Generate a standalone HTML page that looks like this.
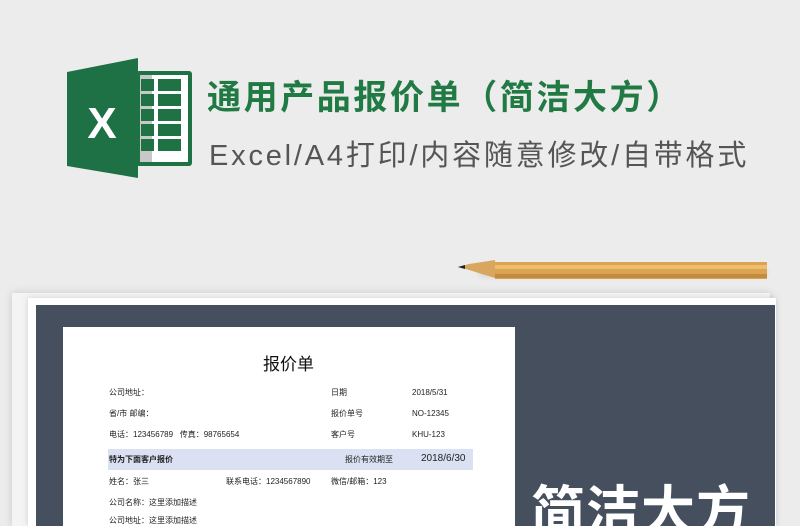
<!DOCTYPE html>
<html><head><meta charset="utf-8"><style>
*{margin:0;padding:0;box-sizing:border-box}
html,body{width:800px;height:526px;overflow:hidden}
body{background:#ececec;position:relative;font-family:"Liberation Sans","Noto Sans CJK SC",sans-serif}
.abs{position:absolute}
.t{color:#222;position:absolute;white-space:nowrap;font-size:8px;line-height:10px}
#clip{position:absolute;left:0;top:0;width:800px;height:526px;overflow:hidden}
</style></head><body><div id="clip">
<svg class="abs" style="left:60px;top:50px" width="140" height="140" viewBox="60 50 140 140">
<rect x="136" y="71" width="56" height="95" rx="3" fill="#1f7244"/>
<rect x="140" y="75" width="48" height="87" fill="#fff"/>
<rect x="140" y="75" width="12" height="87" fill="#c8c8c8"/>
<g fill="#1f7244">
<rect x="141" y="79" width="13" height="12"/><rect x="158" y="79" width="23" height="12"/>
<rect x="141" y="94" width="13" height="12"/><rect x="158" y="94" width="23" height="12"/>
<rect x="141" y="109" width="13" height="12"/><rect x="158" y="109" width="23" height="12"/>
<rect x="141" y="124" width="13" height="12"/><rect x="158" y="124" width="23" height="12"/>
<rect x="141" y="139" width="13" height="12"/><rect x="158" y="139" width="23" height="12"/>
</g>
<polygon points="67,72 138,58 138,178 67,166" fill="#1e7145"/>
<text x="102" y="138" text-anchor="middle" fill="#fff" font-size="44" font-weight="bold" font-family="Liberation Sans">X</text>
</svg>
<div class="abs" style="left:207px;top:70px;font-size:34px;font-weight:bold;color:#217a44;letter-spacing:2.6px;white-space:nowrap">通用产品报价单（简洁大方）</div>
<div class="abs" style="left:209px;top:132px;font-size:29px;color:#555;letter-spacing:2.8px;white-space:nowrap">Excel/A4打印/内容随意修改/自带格式</div>
<div class="abs" style="left:480px;top:270px;width:286px;height:6px;background:rgba(0,0,0,0.12);filter:blur(3px)"></div>
<svg class="abs" style="left:455px;top:260px" width="315" height="22">
<polygon points="3,7 14,4 40,0 40,18 14,10" fill="#d9a660"/>
<polygon points="3,7 10,5 10,9" fill="#222"/>
<rect x="40" y="2" width="272" height="17" fill="#dba452"/>
<rect x="40" y="5" width="272" height="4" fill="#eebd6e"/>
<rect x="40" y="14" width="272" height="4" fill="#c38b3d"/>
</svg>
<div class="abs" style="left:12px;top:293px;width:758px;height:233px;background:#f4f4f4;box-shadow:0 0 8px rgba(0,0,0,0.15)"></div>
<div class="abs" style="left:28px;top:298px;width:748px;height:228px;background:#fff;box-shadow:0 0 6px rgba(0,0,0,0.15)"></div>
<div class="abs" style="left:36px;top:305px;width:739px;height:221px;background:#454f5e"></div>
<div class="abs" style="left:63px;top:327px;width:452px;height:199px;background:#fff"></div>
<div class="abs" style="left:263px;top:350px;font-size:17px;color:#111">报价单</div>
<div class="t" style="left:109px;top:388px">公司地址：</div>
<div class="t" style="left:331px;top:388px">日期</div>
<div class="t" style="left:412px;top:388px">2018/5/31</div>
<div class="t" style="left:109px;top:409px">省/市 邮编：</div>
<div class="t" style="left:331px;top:409px">报价单号</div>
<div class="t" style="left:412px;top:409px">NO-12345</div>
<div class="t" style="left:109px;top:430px">电话：123456789 &nbsp; 传真：98765654</div>
<div class="t" style="left:331px;top:430px">客户号</div>
<div class="t" style="left:412px;top:430px">KHU-123</div>
<div class="abs" style="left:108px;top:449px;width:365px;height:21px;background:#d9e1f2"></div>
<div class="t" style="left:109px;top:455px;font-weight:bold">特为下面客户报价</div>
<div class="t" style="left:345px;top:455px">报价有效期至</div>
<div class="t" style="left:421px;top:453px;font-size:10px;line-height:12px">2018/6/30</div>
<div class="t" style="left:109px;top:477px">姓名：张三</div>
<div class="t" style="left:226px;top:477px">联系电话：1234567890</div>
<div class="t" style="left:331px;top:477px">微信/邮箱：123</div>
<div class="t" style="left:109px;top:498px">公司名称：这里添加描述</div>
<div class="t" style="left:109px;top:516px">公司地址：这里添加描述</div>
<div class="abs" style="left:531px;top:474px;height:52px;overflow:hidden;font-size:54px;line-height:76px;font-weight:bold;color:#fff;letter-spacing:1px;white-space:nowrap">简洁大方</div>
</div></body></html>
